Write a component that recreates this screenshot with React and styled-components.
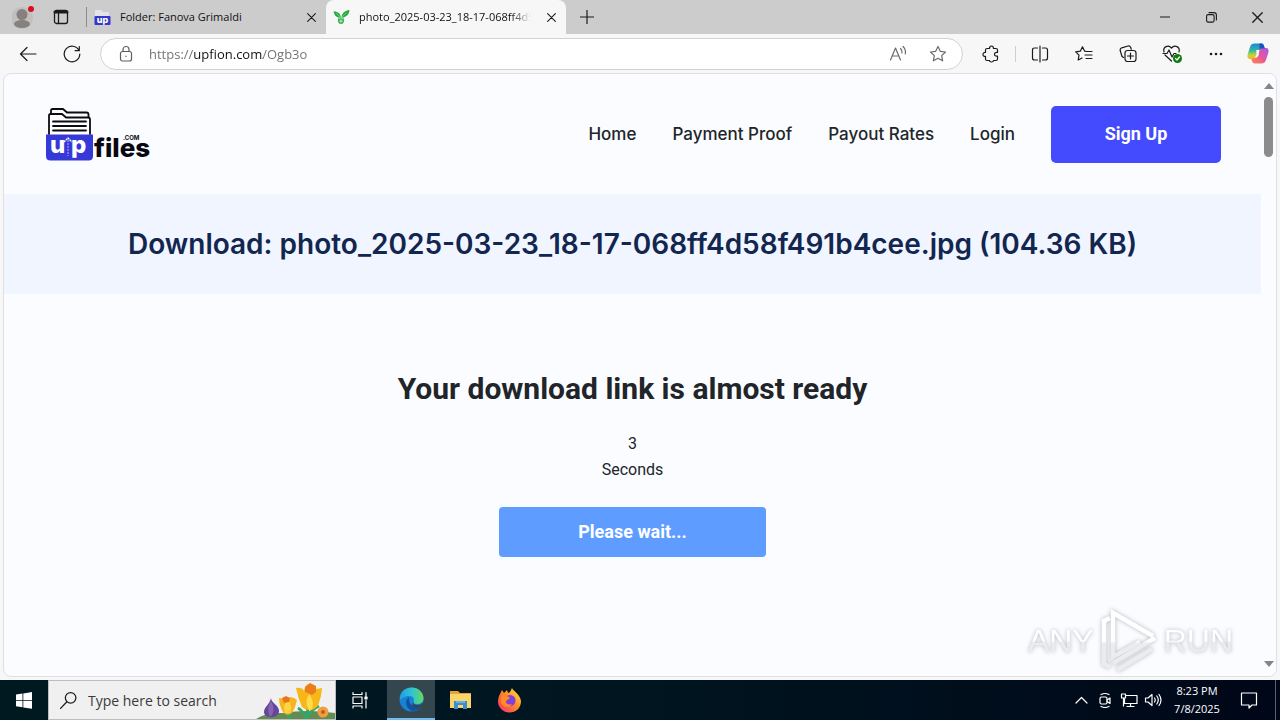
import React, { useState } from "react";
import styled, { createGlobalStyle } from "styled-components";

const GlobalStyle = createGlobalStyle`
  * {
    box-sizing: border-box;
  }
  body {
    margin: 0;
    background: #f7f7f7;
    font-family: "Open Sans", "Noto Sans", sans-serif;
  }
  button {
    border: 0;
    padding: 0;
    background: none;
    color: inherit;
    font-family: inherit;
    cursor: pointer;
  }
`;

const Screen = styled.div`
  display: flex;
  flex-direction: column;
  min-height: 100vh;
`;

/* browser chrome */

const TabBar = styled.div`
  display: flex;
  align-items: center;
  height: 34px;
  padding-left: 1px;
  background: #cccccc;
  color: #111;
`;

const IconButton = styled.button`
  display: flex;
  flex: none;
  align-items: center;
  justify-content: center;
  width: ${(p) => p.$width || 44}px;
  height: ${(p) => p.$height || 34}px;
  color: ${(p) => p.$color || "#1b1b1b"};
`;

const TabStrip = styled.div`
  display: flex;
  margin-left: 9px;
`;

const TabItem = styled.div`
  display: flex;
  align-items: center;
  gap: 9px;
  width: 240px;
  height: 34px;
  padding: 0 4px 0 7px;
  border-radius: 8px 8px 0 0;
  background: ${(p) => (p.$active ? "#f7f7f7" : "transparent")};
  border-left: ${(p) => (p.$active ? "0" : "1px solid #8b8b8b")};
  border-image: ${(p) =>
    p.$active
      ? "none"
      : "linear-gradient(transparent 8px, #8b8b8b 8px, #8b8b8b 26px, transparent 26px) 1"};
`;

const TabTitle = styled.span`
  flex: 1;
  overflow: hidden;
  white-space: nowrap;
  font-size: 11px;
  line-height: 16px;
  mask-image: ${(p) =>
    p.$fade ? "linear-gradient(to right, #000 88%, transparent)" : "none"};
`;

const Spacer = styled.div`
  flex: 1;
`;

const Toolbar = styled.div`
  display: flex;
  align-items: center;
  height: 39px;
  padding: 0 2px 0 6px;
`;

const AddressBar = styled.label`
  display: flex;
  flex: 1;
  align-items: center;
  height: 32px;
  margin: 0 6px;
  padding: 0 4px;
  border: 1px solid #d2d2d2;
  border-radius: 16px;
  background: #fff;
`;

const AddressInput = styled.input`
  flex: 1;
  min-width: 0;
  padding: 0;
  border: 0;
  outline: 0;
  font-family: inherit;
  font-size: 13px;
  line-height: 20px;
  color: transparent;
  background: linear-gradient(
    to right,
    #6f6f6f 44px,
    #111 44px,
    #111 114px,
    #6f6f6f 114px
  );
  background-clip: text;
`;

const Divider = styled.div`
  width: 1px;
  height: 16px;
  margin: 0 2px;
  background: #cfcfcf;
`;

/* page */

const Viewport = styled.div`
  position: relative;
  display: flex;
  flex: 1;
  margin: 0 3px 3px;
  border: 1px solid #e0e0e4;
  border-radius: 8px;
  overflow: hidden;
  background: #fafcff;
`;

const Page = styled.div`
  flex: 1;
  min-width: 0;
`;

const Header = styled.header`
  display: flex;
  align-items: center;
  justify-content: space-between;
  height: 120px;
  padding: 0 40px;
`;

const Nav = styled.nav`
  display: flex;
  align-items: center;
  gap: 36px;
`;

const NavLink = styled.a`
  font-family: Inter, sans-serif;
  font-size: 17px;
  font-weight: 500;
  line-height: 24px;
  color: #212529;
  text-decoration: none;
`;

const SignUp = styled.a`
  width: 170px;
  padding-bottom: 1px;
  border-radius: 5px;
  background: #444bff;
  color: #fff;
  font-family: Roboto, sans-serif;
  font-size: 18px;
  font-weight: 700;
  line-height: 56px;
  text-align: center;
  text-decoration: none;
`;

const Banner = styled.section`
  display: flex;
  align-items: center;
  justify-content: center;
  min-height: 100px;
  background: #f0f5ff;
`;

const FileTitle = styled.h1`
  margin: 0;
  font-family: Inter, sans-serif;
  font-size: 28px;
  font-weight: 600;
  line-height: 36px;
  color: #12264f;
`;

const Main = styled.main`
  display: flex;
  flex-direction: column;
  align-items: center;
  padding-top: 77px;
  font-family: Roboto, sans-serif;
  color: #212529;
`;

const Ready = styled.h2`
  margin: 0 0 24px;
  font-size: 30px;
  font-weight: 700;
  line-height: 36px;
`;

const Counter = styled.div`
  font-size: 16px;
  line-height: 26px;
  text-align: center;
`;

const WaitButton = styled.button`
  width: 267px;
  height: 50px;
  margin-top: 24px;
  padding-bottom: 2px;
  border-radius: 4px;
  background: #5e9dff;
  color: #fff;
  font-size: 18px;
  font-weight: 700;
`;

const Scrollbar = styled.div`
  display: flex;
  flex-direction: column;
  align-items: center;
  width: 15px;
  padding: 9px 0;
  background: #fafcff;
`;

const Arrow = styled.div`
  border: 5px solid transparent;
  border-top: ${(p) => (p.$up ? "0" : "6px solid #858585")};
  border-bottom: ${(p) => (p.$up ? "6px solid #858585" : "0")};
`;

const Thumb = styled.div`
  width: 9px;
  height: 60px;
  margin-top: 8px;
  border-radius: 5px;
  background: #8b8b8b;
`;

const Watermark = styled.div`
  position: absolute;
  right: 43px;
  bottom: 2px;
  display: flex;
  align-items: center;
  gap: 6px;
  font-family: "Liberation Sans", sans-serif;
  font-size: 32px;
  line-height: 66px;
  filter: drop-shadow(0 0 2px #b4b6bb);
  pointer-events: none;
`;

const WatermarkText = styled.span`
  color: transparent;
  background: linear-gradient(#fff 50%, #ebecef 52%);
  background-clip: text;
`;

/* taskbar */

const Taskbar = styled.footer`
  display: flex;
  align-items: center;
  height: 40px;
  background: linear-gradient(to right, #001820, #001520 50%, #000718);
  color: #fff;
`;

const SearchBox = styled.label`
  display: flex;
  align-items: center;
  width: 288px;
  height: 40px;
  padding-left: 10px;
  gap: 10px;
  border: 1px solid #bdbdbd;
  background: #f0f0f0;
  color: #1d1d1d;
`;

const SearchInput = styled.input`
  flex: 1;
  min-width: 0;
  padding: 0;
  border: 0;
  outline: 0;
  background: none;
  font-family: inherit;
  font-size: 14px;
  &::placeholder {
    color: #3a3a3a;
    opacity: 1;
  }
`;

const AppButton = styled(IconButton)`
  width: 48px;
  height: 40px;
  margin-left: ${(p) => p.$gap || 0}px;
  color: #fff;
  background: ${(p) => (p.$active ? "#34474e" : "none")};
  border-bottom: ${(p) => (p.$active ? "2px solid #76b9ed" : "0")};
`;

const Clock = styled.div`
  width: 64px;
  font-size: 11px;
  line-height: 18px;
  text-align: center;
`;

const ShowDesktop = styled.button`
  width: 5px;
  height: 40px;
  margin-left: 6px;
  border-left: 1px solid #5a6070;
`;

const Glyph = ({ size = 18, w = 1.2, box = 18, children }) => (
  <svg
    width={size}
    height={size}
    viewBox={`0 0 ${box} ${box}`}
    fill="none"
    stroke="currentColor"
    strokeWidth={w}
    strokeLinecap="round"
    strokeLinejoin="round"
    aria-hidden="true"
  >
    {children}
  </svg>
);

const CloseIcon = ({ size = 9 }) => (
  <Glyph size={size} box={10}>
    <path d="M.7.7l8.6 8.6M9.3.7L.7 9.3" />
  </Glyph>
);

const Avatar = () => (
  <svg width="22" height="24" viewBox="0 0 22 24" aria-hidden="true">
    <circle cx="10" cy="13" r="11" fill="#c2bfbc" />
    <circle cx="10" cy="9.5" r="5.5" fill="#85817f" />
    <ellipse cx="10" cy="19" rx="8" ry="4" fill="#85817f" />
    <circle cx="19" cy="4" r="3" fill="#d4111d" />
  </svg>
);

const UpFavicon = () => (
  <svg width="17" height="17" viewBox="0 0 17 17" aria-hidden="true">
    <path d="M1 1h6l2 2h6v6H1z" fill="#e2e4ea" />
    <rect x=".5" y="7" width="16" height="9" rx="1" fill="#3437c8" />
    <text
      x="8.5"
      y="13.5"
      fill="#fff"
      fontFamily="Inter, sans-serif"
      fontWeight="800"
      fontSize="9"
      textAnchor="middle"
    >
      up
    </text>
  </svg>
);

const SproutFavicon = () => (
  <svg width="17" height="17" viewBox="0 0 17 17" aria-hidden="true">
    <path d="M.5 2.5C4 2 7.500 4 8 9 4 8.500 1.500 7 .5 2.500z" fill="#25a83d" />
    <path d="M16.500 1C12 1.500 8.500 4 8.500 9 13 8 16 6 16.500 1z" fill="#25a83d" />
    <path d="M5 9q1 1 3 0 2 1 3 0 .8 6-3 6T5 9z" fill="#3fb553" />
    <circle cx="8" cy="12" r="1.500" fill="#9be0a4" />
    <path d="M3 4l5 5 5.500-5.500" stroke="#8ddb93" strokeWidth=".7" fill="none" />
  </svg>
);

const Copilot = () => (
  <svg width="22" height="21" viewBox="0 0 22 21" aria-hidden="true">
    <defs>
      <linearGradient id="copA" x1="0" y1="0" x2="0" y2="1">
        <stop offset="0" stopColor="#1786dc" />
        <stop offset=".45" stopColor="#35b8a0" />
        <stop offset=".75" stopColor="#c3d43c" />
        <stop offset="1" stopColor="#fbb61d" />
      </linearGradient>
      <linearGradient id="copB" x1="1" y1="0" x2="0" y2="1">
        <stop offset="0" stopColor="#a35ae8" />
        <stop offset=".5" stopColor="#ea5599" />
        <stop offset="1" stopColor="#ff8a45" />
      </linearGradient>
    </defs>
    <path d="M7.500.5h7c1.500 0 2 1 2.500 2.500l.8 2.500h-3c-1.500 0-2.300 1-2.700 2.300l-2 5.700c-.6 1.500-1.500 2.500-3 2.500H3C.8 16 0 14 .6 11.500l2.600-8C3.900 1.500 5.300.5 7.500.5z" fill="url(#copA)" />
    <path d="M14.500 20.500h-7c-1.500 0-2-1-2.500-2.500L4.200 15.500h3c1.500 0 2.300-1 2.700-2.300l2-5.700C12.500 6 13.400 5 14.900 5H19c2.200 0 3 2 2.400 4.500l-2.600 8c-.7 2-2.100 3-4.300 3z" fill="url(#copB)" />
    <path d="M12.500.5h2c1.500 0 2 1 2.500 2.500l.8 2.500h-3c-1 0-1.700.5-2.200 1.300z" fill="#1b51ba" />
    <path d="M9.300 7h3.200l-1 5.500-1.700 2H8l1.500-3z" fill="#f7f7f7" />
  </svg>
);

const SiteLogo = () => (
  <svg width="108" height="56" viewBox="0 0 108 56" role="img" aria-label="upfiles.com">
    <g fill="none" stroke="#0b0b12" strokeWidth="1.8" strokeLinejoin="round" strokeLinecap="round">
      <path d="M5 28V9.500Q5 8 6.500 8H18l4 3.500h22q2 0 2 2V28" fill="#fff" />
      <path d="M7 7.500V4.500Q7 3 8.500 3H19l4 3.500h19.500q2 0 2 2V11" />
      <path d="M9 15.500h33M9 20h33M9 24.500h33" />
    </g>
    <path d="M2 28.500h47V50q0 4.500-4.500 4.500h-38Q2 54.500 2 50z" fill="#3639d8" />
    <g fontFamily="Inter, sans-serif" fontWeight="800">
      <text x="6" y="47" fill="#fff" fontSize="24">u</text>
      <text x="27" y="47" fill="#fff" fontSize="24">p</text>
      <text x="50" y="51" fill="#08080e" fontSize="26">files</text>
      <text x="79" y="34" fill="#08080e" fontSize="6" fontWeight="700">.COM</text>
    </g>
    <path d="M20 36l4-4 4 4" fill="none" stroke="#fff" strokeWidth="1.400" strokeDasharray="2 .7" />
    <path d="M24 34v16" stroke="#9a9cf0" strokeWidth="1.200" strokeDasharray="2 1" />
  </svg>
);

const PlayMark = () => (
  <svg width="58" height="66" viewBox="0 0 58 66" fill="none" aria-hidden="true">
    <defs>
      <linearGradient id="mark" x1="0" y1="0" x2="0" y2="66" gradientUnits="userSpaceOnUse">
        <stop offset=".5" stopColor="#fff" />
        <stop offset=".54" stopColor="#ebecef" />
      </linearGradient>
    </defs>
    <g stroke="url(#mark)" strokeWidth="4.500">
      <path d="M10 10L4 13v43l6 3" />
      <path d="M53 28L13 5v44l27-15" />
      <path d="M13 55l42-25M17 62l35-21" />
    </g>
  </svg>
);

const Flowers = () => (
  <svg width="79" height="38" viewBox="0 0 79 38" aria-hidden="true">
    <path d="M0 38q10-7 27-6 24-4 52 0v6z" fill="#638b52" />
    <path d="M29 29q2 5 7 9M51 26q2 6-1 12M42 27q5 3 8 11M63 25q-9 4-12 13" stroke="#35a564" strokeWidth="3" fill="none" />
    <path d="M15 17c0 5 8 7 8 13 0 8-15 8-15 1 0-5 6-8 7-14z" fill="#67459b" />
    <path d="M15 20c-4 6-3 12-1 16 5-4 4-11 1-16z" fill="#8563b0" />
    <path d="M23 17l6 1 2 3 3-5 4 1 3 2-2 7-3 6q-5 4-9-1-4-7-4-14z" fill="#f7b51c" />
    <path d="M29 32q-3-8 3-13 5 6 2 13z" fill="#ffd345" />
    <path d="M26 17l4-2 4 2-1 4-5 1z" fill="#e8771b" />
    <path d="M40 7q6-1 8 3 1-7 6-7 5 1 6 5l6-1-1 8-3 10q-8 8-16 1-4-9-6-19z" fill="#f8b719" />
    <path d="M49 6l5-4 6 3v6l-4 3-7-3z" fill="#ed7d1b" />
    <path d="M53 29q-5-8 0-16 6 8 3 15z" fill="#ffdc4b" />
    <circle cx="67" cy="31" r="5.500" fill="#efa03e" />
    <circle cx="67" cy="31" r="2" fill="#c45a1b" />
    <path d="M74 38l4-4" stroke="#4e9950" strokeWidth="2" />
  </svg>
);

const EdgeLogo = () => (
  <svg width="25" height="25" viewBox="0 0 25 25" aria-hidden="true">
    <defs>
      <linearGradient id="edgeTop" x1="0" x2="1">
        <stop offset="0" stopColor="#249de0" />
        <stop offset=".5" stopColor="#2fc3d3" />
        <stop offset="1" stopColor="#65da5c" />
      </linearGradient>
    </defs>
    <circle cx="12.500" cy="12.500" r="12" fill="#1682d6" />
    <path d="M1 10C2 4 7 .5 12.500.5c7 0 12 5 12 10.500 0 4-3 6-6.500 6-3 0-4-1-3.500-2 1-1.500 1-6-4.500-6-4 0-7 2-9 4z" fill="url(#edgeTop)" />
    <path d="M8.500 11.500c-3 4-1 10 4.500 12.500 5 0 8-2.500 10-5.500-6 2.500-13 0-13-6 0-1 .3-2 .8-2.500z" fill="#14509d" />
    <path d="M14.800 15c-.8 1.500 1 3 3.700 3 2 0 4-.8 5.300-2l.7 1-1.300 2.500c-1.500.8-3.500 1.200-5.200 1-4-.3-6-3.500-3.200-5.500z" fill="#34474e" />
  </svg>
);

const FolderLogo = () => (
  <svg width="23" height="20" viewBox="0 0 23 20" aria-hidden="true">
    <path d="M1 1h8l2 2h11v15H1z" fill="#e6a532" />
    <path d="M1 4h21v14H1z" fill="#fbd56c" />
    <path d="M5 11h13v8h-4v-4H9v4H5z" fill="#3b8fce" />
    <path d="M7 11h9v2H7z" fill="#63b5e6" />
  </svg>
);

const FirefoxLogo = () => (
  <svg width="25" height="25" viewBox="0 0 25 25" aria-hidden="true">
    <defs>
      <linearGradient id="fox" x1="1" y1="0" x2="0" y2="1">
        <stop offset="0" stopColor="#fff04a" />
        <stop offset=".45" stopColor="#ff8d26" />
        <stop offset="1" stopColor="#f52673" />
      </linearGradient>
    </defs>
    <path d="M3 6l2-4 2 3 3-3 1 3c2 0 3-3 4-5 1 3 8 6 9 13 0 7-5 11.500-11.500 11.500S1 19.500 1 13.500C1 10 2 8 3 6z" fill="url(#fox)" />
    <circle cx="13" cy="12.500" r="5.500" fill="#8240d8" />
    <path d="M5 8c3-1 6 0 8 2-1 2-4 1-4 4 0 2 3 3 6 2-3 5-11 3-11-3 0-2 0-4 1-5z" fill="#ff8b22" />
  </svg>
);

const windowButtons = [
  ["Minimize", <Glyph size={10} box={10}><path d="M0 5h10" /></Glyph>],
  [
    "Restore",
    <Glyph size={11} box={11} w={1.1}>
      <rect x=".6" y="2.600" width="7.500" height="7.500" rx="1.500" />
      <path d="M3 .6h5q2.400 0 2.400 2.400v5" />
    </Glyph>,
  ],
  ["Close", <CloseIcon size={11} />],
];

const star = "M9 1.500l2.300 4.800 5.200.7-3.800 3.600.9 5.200L9 13.300l-4.600 2.500.9-5.200L1.500 7l5.200-.7z";

const toolbarButtons = [
  [
    "Split screen",
    <Glyph>
      <path d="M6.500 3H3.500Q1.500 3 1.500 5v8q0 2 2 2h3M11.500 3h3q2 0 2 2v8q0 2-2 2h-3M9 1v16" />
    </Glyph>,
  ],
  [
    "Favorites",
    <Glyph>
      <path d="M11.500 6.500L9.700 6.200 7.500 1.800 5.300 6.200l-4.600.7L4 10.200l-.8 4.800 3.800-2M11 6.500h6M10 10h7M11 13.500h6" />
    </Glyph>,
  ],
  [
    "Collections",
    <Glyph>
      <path d="M4.500 12.500L3 11.500 1.200 5.500Q.8 3.500 2.800 2.800L9 1q2-.4 2.700 1.500l.6 1.700" />
      <rect x="6" y="5.500" width="11" height="11" rx="2.500" />
      <path d="M11.500 8v6M8.500 11h6" />
    </Glyph>,
  ],
  [
    "Browser essentials",
    <Glyph size={20} box={20}>
      <path d="M2 8C.5 3 6.500 0 9.500 4.200 12.500 0 18.500 3 17 8M3 11l6.500 6M1 9.500h4L7 6l3 7 2-3.500h2" />
      <circle cx="15.500" cy="14.500" r="4.500" fill="#0f7b0f" stroke="none" />
      <path d="M13.500 14.500l1.500 1.500 2.500-3" stroke="#fff" />
    </Glyph>,
  ],
  [
    "Settings and more",
    <svg width="16" height="4" viewBox="0 0 16 4" fill="currentColor" aria-hidden="true">
      <circle cx="3" cy="2" r="1.300" />
      <circle cx="8" cy="2" r="1.300" />
      <circle cx="13" cy="2" r="1.300" />
    </svg>,
  ],
];

const trayButtons = [
  ["Show hidden icons", <Glyph size={16} box={16}><path d="M3 11l5.500-5.500L14 11" /></Glyph>],
  [
    "Meet now",
    <Glyph size={16} box={16}>
      <rect x="3" y="5" width="7" height="7" rx="1.500" />
      <path d="M10 8l3-2v5.500l-3-2M4 2.500q4-2 8 0M4 14.500q4 2 8 0" />
    </Glyph>,
  ],
  [
    "Network",
    <Glyph size={18}>
      <path d="M6 4.500h11v8H4.500V8M7 15.500h7M10.500 12.500v3M1.500 3h4v4h-4zM3.500 7v8" />
    </Glyph>,
  ],
  [
    "Volume",
    <Glyph size={18}>
      <path d="M1.500 7v4H4l4 3.500v-11L4 7zM10.500 7q1.500 2 0 4M12.800 5q3 4 0 8M15 3.500q4 5.500 0 11" />
    </Glyph>,
  ],
];

const navLinks = ["Home", "Payment Proof", "Payout Rates", "Login"];

const BrowserChrome = () => {
  const [url, setUrl] = useState("https://upfion.com/Ogb3o");

  return (
    <>
      <TabBar>
        <IconButton $width={44} aria-label="Profile">
          <Avatar />
        </IconButton>
        <IconButton $width={32} aria-label="Workspaces">
          <Glyph size={16} box={16} w={1.3}>
            <rect x="1.500" y="1.500" width="13" height="13" rx="2" />
            <path d="M2 3h12" strokeWidth="3" />
            <path d="M5.500 4v10" />
          </Glyph>
        </IconButton>
        <TabStrip>
          <TabItem>
            <UpFavicon />
            <TabTitle>Folder: Fanova Grimaldi</TabTitle>
            <IconButton $width={22} aria-label="Close tab">
              <CloseIcon />
            </IconButton>
          </TabItem>
          <TabItem $active>
            <SproutFavicon />
            <TabTitle $fade>photo_2025-03-23_18-17-068ff4d58f491b4cee.jpg</TabTitle>
            <IconButton $width={22} aria-label="Close tab">
              <CloseIcon />
            </IconButton>
          </TabItem>
        </TabStrip>
        <IconButton $width={42} aria-label="New tab">
          <Glyph size={14} box={14}>
            <path d="M7 0v14M0 7h14" />
          </Glyph>
        </IconButton>
        <Spacer />
        {windowButtons.map(([name, icon]) => (
          <IconButton key={name} $width={46} aria-label={name}>
            {icon}
          </IconButton>
        ))}
      </TabBar>
      <Toolbar>
        <IconButton aria-label="Back">
          <Glyph>
            <path d="M17 9H1.500M8 2.500L1.500 9 8 15.500" />
          </Glyph>
        </IconButton>
        <IconButton aria-label="Refresh">
          <Glyph>
            <path d="M16 5.500A7.800 7.800 0 1 0 16.800 9M16.300 1.500v4.200h-4.200" />
          </Glyph>
        </IconButton>
        <AddressBar>
          <IconButton $color="#5f5f5f" aria-label="View site information">
            <Glyph>
              <rect x="2.500" y="6.500" width="11" height="9.500" rx="2" />
              <path d="M5 6.500V4.500a3 3 0 0 1 6 0v2M8 11v.5" />
            </Glyph>
          </IconButton>
          <AddressInput
            aria-label="Address"
            value={url}
            onChange={(e) => setUrl(e.target.value)}
          />
          <IconButton $width={40} $color="#6b6b6b" aria-label="Read aloud">
            <Glyph>
              <path d="M1.500 15L6.500 3l5 12M3.300 11h6.500M11.500 3.500q2 2 1.500 4.500M14 1.500q3.200 3 2.300 7.500" />
            </Glyph>
          </IconButton>
          <IconButton $width={40} $color="#6b6b6b" aria-label="Add to favorites">
            <Glyph>
              <path d={star} />
            </Glyph>
          </IconButton>
        </AddressBar>
        <IconButton aria-label="Extensions">
          <Glyph>
            <path d="M5 3.500h2.500Q7.500 1 9.500 1t2 2.500H14q1.500 0 1.500 1.500v2.500q-3-.3-3 1.800t3 1.800V14q0 1.500-1.500 1.500h-2.500Q11.500 17 9.500 17t-2-1.500H5Q3.500 15.500 3.500 14v-2.700Q1 11.500 1 9.400t2.500-2V5Q3.500 3.500 5 3.500z" />
          </Glyph>
        </IconButton>
        <Divider />
        {toolbarButtons.map(([name, icon]) => (
          <IconButton key={name} aria-label={name}>
            {icon}
          </IconButton>
        ))}
        <IconButton $width={40} aria-label="Copilot">
          <Copilot />
        </IconButton>
      </Toolbar>
    </>
  );
};

const DownloadPage = () => (
  <Viewport>
    <Page>
      <Header>
        <SiteLogo />
        <Nav>
          {navLinks.map((label) => (
            <NavLink key={label} href="#">
              {label}
            </NavLink>
          ))}
          <SignUp href="#">Sign Up</SignUp>
        </Nav>
      </Header>
      <Banner>
        <FileTitle>
          Download: photo_2025-03-23_18-17-068ff4d58f491b4cee.jpg (104.36 KB)
        </FileTitle>
      </Banner>
      <Main>
        <Ready>Your download link is almost ready</Ready>
        <Counter>
          <div>3</div>
          <div>Seconds</div>
        </Counter>
        <WaitButton>Please wait...</WaitButton>
      </Main>
    </Page>
    <Scrollbar>
      <Arrow $up />
      <Thumb />
      <Spacer />
      <Arrow />
    </Scrollbar>
    <Watermark>
      <WatermarkText>ANY</WatermarkText>
      <PlayMark />
      <WatermarkText>RUN</WatermarkText>
    </Watermark>
  </Viewport>
);

const WindowsTaskbar = () => (
  <Taskbar>
    <AppButton aria-label="Start">
      <svg width="16" height="17" viewBox="0 0 16 17" fill="#fff" aria-hidden="true">
        <path d="M0 2.500l6.500-1V8H0zM7.300 1.400L16 0v8H7.300zM0 8.800h6.500v6.500l-6.500-1zM7.300 8.800H16v8l-8.700-1.400z" />
      </svg>
    </AppButton>
    <SearchBox>
      <Glyph size={19}>
        <circle cx="11" cy="6.500" r="5" />
        <path d="M7.500 10.200L1.500 16.500" />
      </Glyph>
      <SearchInput aria-label="Search" placeholder="Type here to search" />
      <Flowers />
    </SearchBox>
    <AppButton aria-label="Task view">
      <Glyph>
        <path d="M2 1.500v2h9v-2M2 6h9v6.500H2zM2 17v-2h9v2M15 1.500v4M15 9.500V17" />
        <rect x="14" y="6" width="2" height="2" fill="currentColor" />
      </Glyph>
    </AppButton>
    <AppButton $active $gap={3} aria-label="Microsoft Edge">
      <EdgeLogo />
    </AppButton>
    <AppButton $gap={1} aria-label="File Explorer">
      <FolderLogo />
    </AppButton>
    <AppButton $gap={1} aria-label="Firefox">
      <FirefoxLogo />
    </AppButton>
    <Spacer />
    {trayButtons.map(([name, icon]) => (
      <IconButton key={name} $width={24} $height={40} $color="#fff" aria-label={name}>
        {icon}
      </IconButton>
    ))}
    <Clock>
      <div>8:23 PM</div>
      <div>7/8/2025</div>
    </Clock>
    <IconButton $width={40} $height={40} $color="#fff" aria-label="Notifications">
      <Glyph>
        <path d="M1.500 2h15v12H12l-3 3v-3H1.500z" />
      </Glyph>
    </IconButton>
    <ShowDesktop aria-label="Show desktop" />
  </Taskbar>
);

const App = () => (
  <Screen>
    <GlobalStyle />
    <BrowserChrome />
    <DownloadPage />
    <WindowsTaskbar />
  </Screen>
);

export default App;
